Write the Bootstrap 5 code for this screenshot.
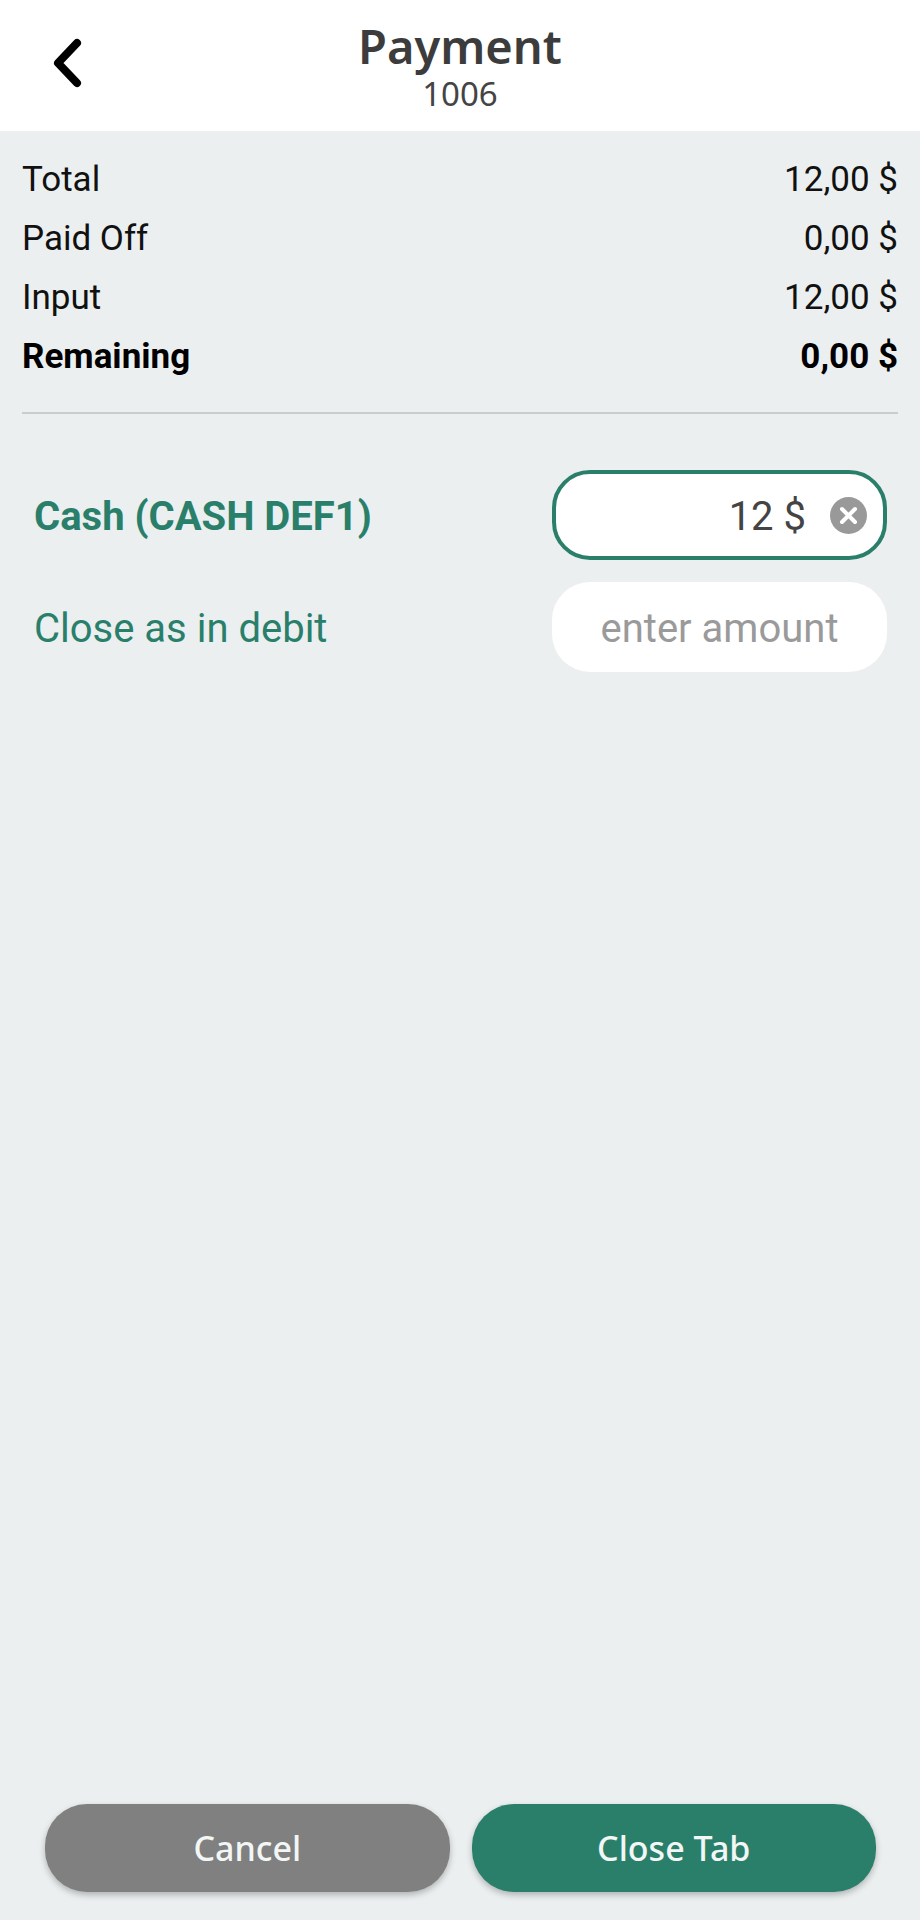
<!DOCTYPE html>
<html lang="en">
<head>
  <title>Payment</title>
  <meta charset="UTF-8" />
  <meta name="viewport" content="width=device-width, initial-scale=1.0" />
  <link href="https://cdn.jsdelivr.net/npm/bootstrap@5.3.0/dist/css/bootstrap.min.css" rel="stylesheet">
  <style>
    body {
      background-color: #ebeff0;
      font-family: Roboto, sans-serif;
      color: #111;
    }

    .pay-screen {
      min-height: 1920px;
    }

    .pay-header {
      height: 131px;
      background-color: #fff;
      display: grid;
      grid-template-columns: 1fr auto 1fr;
    }

    .back-btn {
      padding: 37px 0 0 48px;
    }

    .pay-title {
      font-family: "Noto Sans", sans-serif;
      font-size: 47px;
      font-weight: 600;
      line-height: 46px;
      color: #3c3c3c;
      margin: 23px 0 0;
    }

    .pay-number {
      font-family: "Noto Sans", sans-serif;
      font-size: 33px;
      line-height: 36px;
      color: #444;
      margin-top: 7px;
    }

    .totals {
      padding: 19px 22px 0;
    }

    .total-row {
      height: 59px;
      font-size: 35px;
      line-height: 59px;
    }

    .total-strong {
      color: #000;
    }

    .totals-rule {
      margin: 26px 0 0;
      border-top: 2px solid #c9cdcf;
      opacity: 1;
    }

    .methods {
      padding: 56px 33px 0 34px;
      color: #2a7f6b;
      font-size: 40px;
      gap: 22px;
    }

    .method-label {
      padding-top: 4px;
    }

    .amount-box {
      width: 335px;
      height: 90px;
      background-color: #fff;
      border-radius: 38px;
      padding: 0 18px;
    }

    .amount-box.is-active {
      border: 4px solid #2a7f6b;
      color: #444;
      padding: 0 16px 0 0;
    }

    .amount-value {
      padding-top: 4px;
    }

    .amount-hint {
      color: #9a9a9a;
      padding-top: 4px;
    }

    .clear-btn {
      margin-left: 24px;
    }

    .pay-footer {
      padding: 0 44px 28px 45px;
      gap: 22px;
    }

    .pay-btn {
      flex: 1 1 0;
      height: 88px;
      border: 0;
      border-radius: 42px;
      font-family: "Noto Sans", sans-serif;
      font-size: 34px;
      font-weight: 500;
      color: #f2f6f5;
      box-shadow: 0 3px 6px rgba(0, 0, 0, 0.25);
    }

    .pay-btn-cancel {
      background-color: #808080;
    }

    .pay-btn-close {
      background-color: #2a7f6b;
    }
  </style>
</head>
<body>

  <div class="pay-screen d-flex flex-column">

    <header class="pay-header">
      <div class="back-btn">
        <svg width="34" height="52" viewBox="0 0 34 52">
          <path d="M29 6 L10 26 L29 46" fill="none" stroke="#000" stroke-width="8" stroke-linecap="round" stroke-linejoin="round"/>
        </svg>
      </div>
      <div class="text-center">
        <h1 class="pay-title">Payment</h1>
        <div class="pay-number">1006</div>
      </div>
    </header>

    <main class="flex-grow-1">
      <section class="totals">
        <div class="total-row d-flex justify-content-between"><span>Total</span><span>12,00 $</span></div>
        <div class="total-row d-flex justify-content-between"><span>Paid Off</span><span>0,00 $</span></div>
        <div class="total-row d-flex justify-content-between"><span>Input</span><span>12,00 $</span></div>
        <div class="total-row total-strong d-flex justify-content-between fw-bold"><span>Remaining</span><span>0,00 $</span></div>
        <hr class="totals-rule">
      </section>

      <section class="methods d-flex flex-column">
        <div class="d-flex justify-content-between align-items-center">
          <span class="method-label fw-bold">Cash (CASH DEF1)</span>
          <div class="amount-box is-active d-flex justify-content-end align-items-center">
            <span class="amount-value">12 $</span>
            <svg class="clear-btn" width="37" height="37" viewBox="0 0 37 37">
              <circle cx="18.5" cy="18.5" r="18.5" fill="#999"/>
              <path d="M12 12 L25 25 M25 12 L12 25" stroke="#fff" stroke-width="4" stroke-linecap="round"/>
            </svg>
          </div>
        </div>
        <div class="d-flex justify-content-between align-items-center">
          <span class="method-label">Close as in debit</span>
          <div class="amount-box d-flex justify-content-center align-items-center">
            <span class="amount-hint">enter amount</span>
          </div>
        </div>
      </section>
    </main>

    <footer class="pay-footer d-flex">
      <button type="button" class="btn pay-btn pay-btn-cancel">Cancel</button>
      <button type="button" class="btn pay-btn pay-btn-close">Close Tab</button>
    </footer>

  </div>

  <script src="https://cdn.jsdelivr.net/npm/bootstrap@5.3.0/dist/js/bootstrap.bundle.min.js"></script>
</body>
</html>
